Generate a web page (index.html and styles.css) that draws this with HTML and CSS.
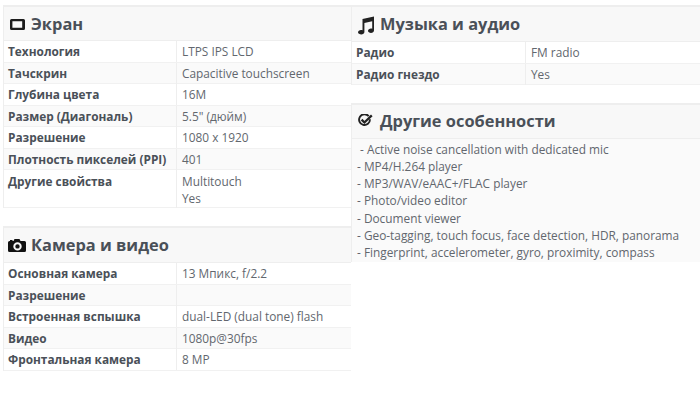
FILE: index.html
```html
<!DOCTYPE html>
<html lang="ru">
<head>
<meta charset="utf-8">
<title>Характеристики</title>
<link rel="stylesheet" href="styles.css">
</head>
<body>
<div class="page">
  <div class="col col-left">
    <section class="panel">
      <h2 class="head"><svg class="icon icon-screen" width="15" height="11" viewBox="0 0 15 11"><path fill-rule="evenodd" fill="#1c1c1c" d="M1.500 0h12A1.500 1.500 0 0 1 15 1.500v8a1.500 1.500 0 0 1-1.500 1.500h-12A1.500 1.500 0 0 1 0 9.500v-8A1.500 1.500 0 0 1 1.500 0zM2.400 2.200v6.600h9.800V2.200z"/></svg>Экран</h2>
      <div class="row"><b>Технология</b><span>LTPS IPS LCD</span></div>
      <div class="row alt"><b>Тачскрин</b><span>Capacitive touchscreen</span></div>
      <div class="row"><b>Глубина цвета</b><span>16M</span></div>
      <div class="row alt"><b>Размер (Диагональ)</b><span>5.5" (дюйм)</span></div>
      <div class="row"><b>Разрешение</b><span>1080 x 1920</span></div>
      <div class="row alt"><b>Плотность пикселей (PPI)</b><span>401</span></div>
      <div class="row tall"><b>Другие свойства</b><span>Multitouch<br>Yes</span></div>
    </section>
    <section class="panel panel-camera">
      <h2 class="head"><svg class="icon icon-camera" width="18" height="13" viewBox="0 0 18 13"><path fill-rule="evenodd" fill="#111" d="M6.500 0h5l1 2H16.500A1.500 1.500 0 0 1 18 3.500V11.500A1.500 1.500 0 0 1 16.500 13H1.500A1.500 1.500 0 0 1 0 11.500V3.500A1.500 1.500 0 0 1 1.500 2H2V1h2.500v1h1zM9.500 3.200a4.200 4.200 0 1 0 0 8.400a4.200 4.200 0 0 0 0-8.400zM9.500 5.200a2.200 2.200 0 1 1 0 4.400a2.200 2.200 0 0 1 0-4.400z"/></svg>Камера и видео</h2>
      <div class="row"><b>Основная камера</b><span>13 Мпикс, f/2.2</span></div>
      <div class="row alt"><b>Разрешение</b><span></span></div>
      <div class="row"><b>Встроенная вспышка</b><span>dual-LED (dual tone) flash</span></div>
      <div class="row alt"><b>Видео</b><span>1080p@30fps</span></div>
      <div class="row"><b>Фронтальная камера</b><span>8 MP</span></div>
    </section>
  </div>
  <div class="col col-right">
    <section class="panel panel-music">
      <h2 class="head"><svg class="icon icon-music" width="16" height="19" viewBox="0 0 16 18"><path fill="#222" d="M4.500 2.500 16 0v14c0 1.500-1.500 2.500-3 2.500s-3-.9-3-2.200 1.400-2.300 3-2.300c.5 0 .9.100 1.200.2V4.800L6.400 6.400V15.600c0 1.400-1.500 2.400-3.100 2.400S0 17.100 0 15.800s1.400-2.300 3-2.300c.6 0 1.100.1 1.500.3z"/></svg>Музыка и аудио</h2>
      <div class="row"><b>Радио</b><span>FM radio</span></div>
      <div class="row alt"><b>Радио гнездо</b><span>Yes</span></div>
    </section>
    <section class="panel panel-other">
      <h2 class="head"><svg class="icon icon-check" width="15" height="13" viewBox="0 0 15 13"><path d="M10.700 2.200A5.400 5.400 0 1 0 11.900 5.300" fill="none" stroke="#222" stroke-width="1.900"/><path d="M3.600 5.600l2.800 2.900L13.800 1.400" fill="none" stroke="#222" stroke-width="2.300"/></svg>Другие особенности</h2>
      <div class="notes">
        <p class="first">- Active noise cancellation with dedicated mic</p>
        <p>- MP4/H.264 player</p>
        <p>- MP3/WAV/eAAC+/FLAC player</p>
        <p>- Photo/video editor</p>
        <p>- Document viewer</p>
        <p>- Geo-tagging, touch focus, face detection, HDR, panorama</p>
        <p>- Fingerprint, accelerometer, gyro, proximity, compass</p>
      </div>
    </section>
  </div>
</div>
</body>
</html>
```
FILE: styles.css
```css
* { box-sizing: border-box; }
html, body { margin: 0; padding: 0; background: #fff; }
body {
  width: 700px;
  height: 408px;
  overflow: hidden;
  font-family: "Open Sans", "Liberation Sans", sans-serif;
  font-size: 11.85px;
  line-height: 17.14px;
  color: #62676e;
}
.page { display: flex; align-items: flex-start; padding-top: 5px; }
.col { display: flex; flex-direction: column; }
.col-left { width: 348px; margin-left: 3px; }
.col-right { width: 349px; }
.panel { border-top: 2px solid #eeeeee; border-left: 1px solid #eeeeee; }
.panel-camera { margin-top: 18px; }
.panel-other { margin-top: 18px; }
.head {
  display: flex;
  align-items: center;
  gap: 6px;
  height: 34px;
  margin: 0;
  padding-left: 6px;
  font-size: 16.4px;
  font-weight: 700;
  color: #4a5058;
  background: #f8f8f8;
  border-bottom: 1px solid #eeeeee;
}
.panel-camera .head { height: 35px; padding-left: 4px; gap: 5px; }
.panel-music .head { height: 35px; padding-left: 6px; }
.panel-other .head { padding-left: 6px; padding-bottom: 2px; gap: 7px; }
.icon { flex: none; }
.icon-screen { margin-top: 1px; }
.icon-music { margin-top: 2px; }
.row {
  display: grid;
  grid-template-columns: 173px 1fr;
  height: 21.5px;
  border-bottom: 1px solid #f1f1f1;
  background: #fff;
}
.col-right .row { grid-template-columns: 174px 1fr; }
.row.alt { background: #fafafa; }
.row.tall { height: 38px; line-height: 16.5px; }
.row b {
  padding: 2px 4px;
  font-weight: 700;
  color: #4a5058;
  border-right: 1px solid #eeeeee;
}
.row span { padding: 2px 5px; }
.row.tall b, .row.tall span { padding-top: 3px; }
.notes {
  height: 123px;
  padding: 2px 0 0 5px;
  background: #fafafa;
}
.notes p { margin: 0; }
.notes .first { padding-left: 3px; }
```
